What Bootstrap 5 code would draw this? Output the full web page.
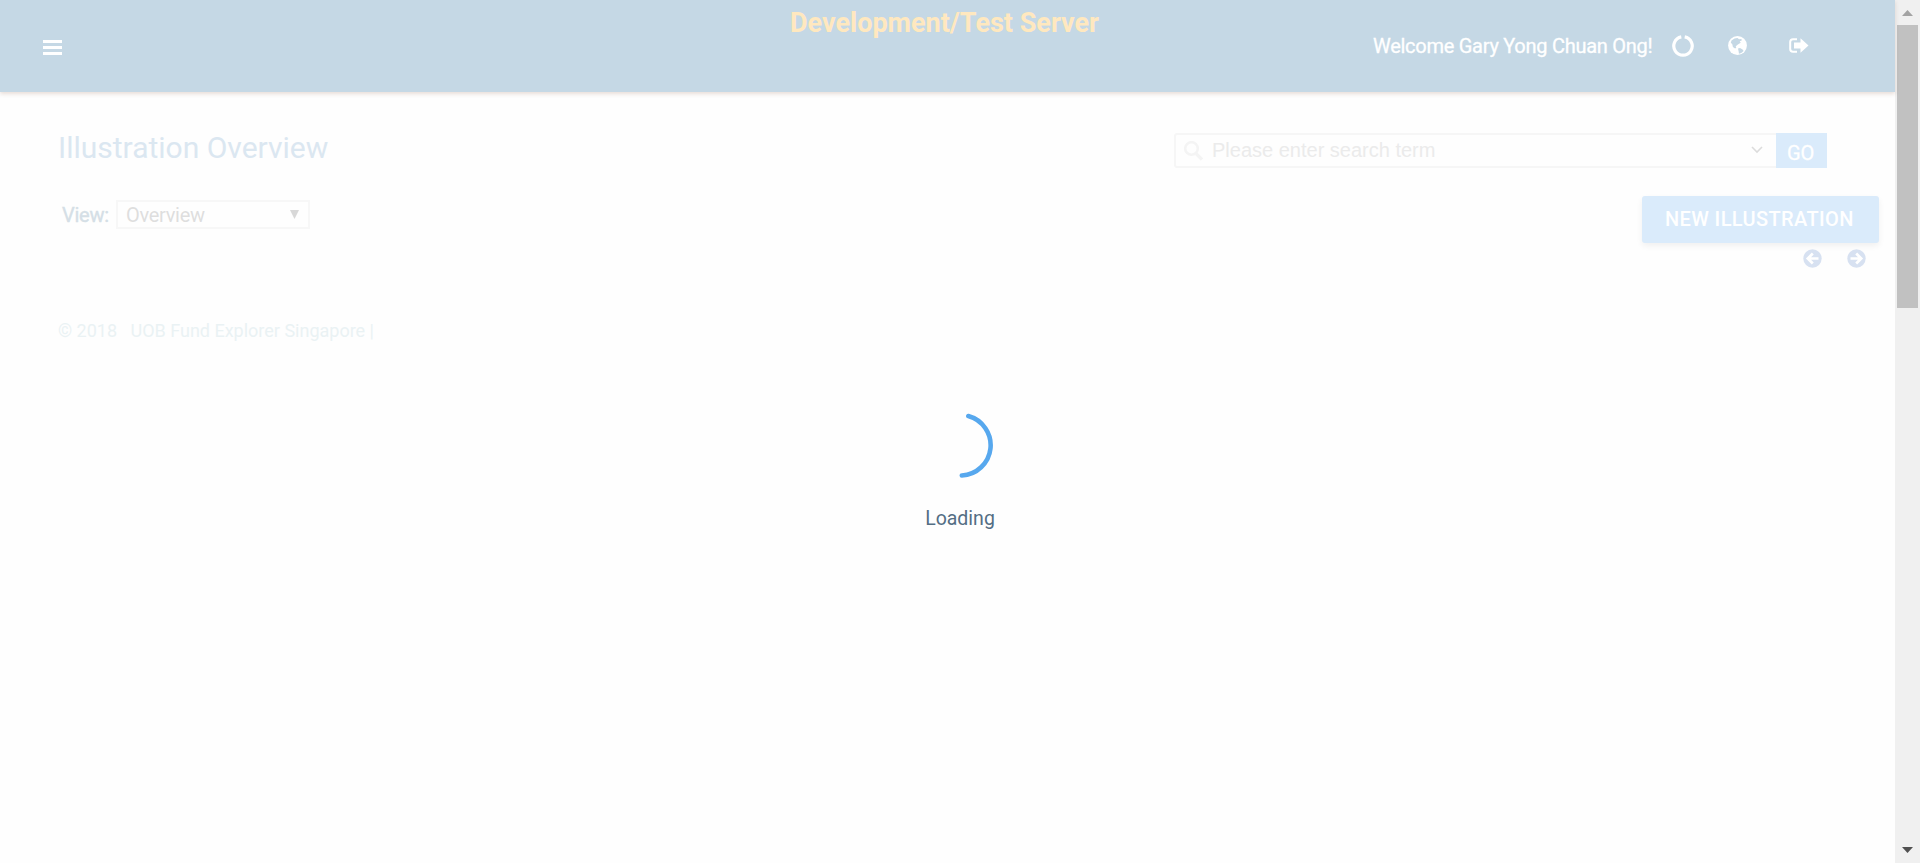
<!DOCTYPE html>
<html lang="en">
<head>
<meta charset="utf-8">
<title>Illustration Overview</title>
<link href="https://cdn.jsdelivr.net/npm/bootstrap@5.3.0/dist/css/bootstrap.min.css" rel="stylesheet">
<style>
html,body{height:100%;overflow:hidden}
body{font-family:Roboto,sans-serif;background:#fefefe;font-size:20px}
svg{display:block;flex:none}
.topbar{display:grid;grid-template-columns:790px 1fr 522px;height:92px;background:#c5d8e5;color:#fff;box-shadow:0 2px 4px rgba(120,60,30,.17)}
.burger{margin:40px 0 0 43px}
.banner{font-size:27px;font-weight:700;line-height:32px;color:#ffe8bf;margin-top:7px;white-space:nowrap}
.welcome{width:280px;line-height:24px;white-space:nowrap;letter-spacing:-.27px;-webkit-text-stroke:.3px #fff}
.userbar{margin-top:34px}
.icon-ring{margin:1px 0 0 19px}
.icon-globe{margin:2px 0 0 34px}
.icon-exit{margin:4px 0 0 41px}
.title{font-size:30px;line-height:36px;font-weight:400;color:#dbe7f1;margin:1px 0 0}
.headrow{padding:37px 68px 0 58px;height:104px}
.search{margin-top:4px;height:35px;width:653px}
.searchbox{border:2px solid #f6f6f6;border-right:0;border-radius:3px 0 0 3px;font-family:"Liberation Sans",sans-serif;color:#ebebeb;line-height:31px}
.icon-search{margin:0 9px 0 8px}
.icon-down{margin:-1px 13px 0 auto}
.go{width:51px;background:#daebfb;color:#fff;line-height:24px;padding:8px 0 0 11px;-webkit-text-stroke:.3px #fff}
.viewrow{padding:0 16px 0 62px;height:90px}
.viewlabel{width:54px;color:#d5dfe6;line-height:24px;margin-top:7px;letter-spacing:-.25px;-webkit-text-stroke:.4px #d5dfe6}
.viewselect{width:194px;height:29px;margin-top:4px;border:2px solid #f7f7f7;line-height:26px;color:#dedede;padding:0 9px 0 8px;letter-spacing:-.3px}
.newbtn{width:237px;height:47px;background:#daebfb;color:#fff;border-radius:3px;font-weight:500;line-height:47px;letter-spacing:.38px;box-shadow:0 3px 6px rgba(0,0,0,.06);white-space:nowrap;padding-left:23px}
.pager{margin:6px 13px 0 0;gap:25px}
.foot{padding-left:58px;margin-top:34px;font-size:18px;line-height:22px;color:#eaf2f4}
.scroll{width:25px;background:#f0f0f0}
.thumb{width:21px;height:283px;background:#c1c1c1;margin:9px auto auto 2px}
.arrow-up{margin:10px 0 0 7px}
.arrow-down{margin:0 0 10px 7px}
.loader{position:absolute;left:0;right:0;top:412px;color:#546e84;line-height:24px;font-size:19.5px}
.loader-text{margin-top:27px}
</style>
</head>
<body class="d-flex">
<div class="flex-grow-1">
  <header class="topbar position-relative">
    <svg class="burger" width="19" height="15" fill="#fff"><path d="M0 0h19v3H0zM0 6h19v3H0zM0 12h19v3H0z"/></svg>
    <div class="banner">Development/Test Server</div>
    <div class="userbar d-flex align-items-start">
      <div class="welcome">Welcome Gary Yong Chuan Ong!</div>
      <svg class="icon-ring" width="22" height="22" fill="none" stroke="#fff" stroke-width="3.200"><path d="M12.700 1.900a9.200 9.200 0 1 1-3.400 0"/></svg>
      <svg class="icon-globe" width="20" height="20" viewBox="0 0 20 20"><circle cx="9.500" cy="9.500" r="9.400" fill="#fff"/><path fill="#c5d8e5" d="M3.500 4.500 6.500 2.500l3-.4 1.500 1.200 2.500-.3.200 1.600-2 .6 1 1.600-2.800 1.800-2.200 1.600.6 1.600-1.200.6-2.200-1.400-.6-2.800-1.500-1.400zM10 12.500l2-.6 2.600 1.600 1 1.400-2.400 2-2.200.8-.4-2.500z"/></svg>
      <svg class="icon-exit" width="21" height="16"><path fill="none" stroke="#fff" stroke-width="2" d="M8 1.200H4Q1.200 1.200 1.200 4v7q0 2.800 2.800 2.800h4"/><path fill="#fff" d="M5 4.500h6.500V.2l8 7.300-8 7.300v-4.300H5z"/></svg>
    </div>
  </header>
  <main>
    <div class="headrow d-flex justify-content-between align-items-start">
      <h1 class="title">Illustration Overview</h1>
      <div class="search d-flex">
        <div class="searchbox flex-grow-1 d-flex align-items-center">
          <svg class="icon-search" width="19" height="20" fill="none" stroke="#f4f4f4"><circle cx="7.500" cy="7.500" r="6.300" stroke-width="2.600"/><path d="m12 12.500 6 6" stroke-width="3.200"/></svg>
          <span>Please enter search term</span>
          <svg class="icon-down" width="12" height="8" fill="none" stroke="#dcdcdc" stroke-width="1.600"><path d="m1 1 5 5 5-5"/></svg>
        </div>
        <div class="go">GO</div>
      </div>
    </div>
    <div class="viewrow d-flex align-items-start">
      <label class="viewlabel">View:</label>
      <div class="viewselect d-flex align-items-center">Overview<svg class="ms-auto" width="9" height="9" fill="#d8d8d8"><path d="M0 0h9L4.500 9z"/></svg></div>
      <div class="ms-auto d-flex flex-column align-items-end">
        <div class="newbtn">NEW ILLUSTRATION</div>
        <div class="pager d-flex">
          <svg width="19" height="19"><circle cx="9.500" cy="9.500" r="9.200" fill="#d7e1f1"/><path d="M15.500 9.500H5M9.800 4.500l-5 5 5 5" fill="none" stroke="#fff" stroke-width="2.700"/></svg>
          <svg width="19" height="19"><circle cx="9.500" cy="9.500" r="9.200" fill="#d7e1f1"/><path d="M3.500 9.500H14M9.200 4.500l5 5-5 5" fill="none" stroke="#fff" stroke-width="2.700"/></svg>
        </div>
      </div>
    </div>
    <footer class="foot">© 2018 &nbsp; UOB Fund Explorer Singapore |</footer>
  </main>
</div>
<aside class="scroll d-flex flex-column">
  <svg class="arrow-up" width="11" height="6" fill="#a3a3a3"><path d="M0 6 5.500 0 11 6z"/></svg>
  <div class="thumb"></div>
  <svg class="arrow-down" width="11" height="6" fill="#505050"><path d="M0 0h11L5.500 6z"/></svg>
</aside>
<div class="loader text-center">
  <svg class="mx-auto" width="68" height="68" fill="none" stroke="#57a8ee" stroke-width="4.600" stroke-linecap="round"><path d="M41.500 4A30.300 30.300 0 0 1 35 63.500" transform="translate(.8 0)"/></svg>
  <div class="loader-text">Loading</div>
</div>
<script src="https://cdn.jsdelivr.net/npm/bootstrap@5.3.0/dist/js/bootstrap.bundle.min.js"></script>
</body>
</html>
